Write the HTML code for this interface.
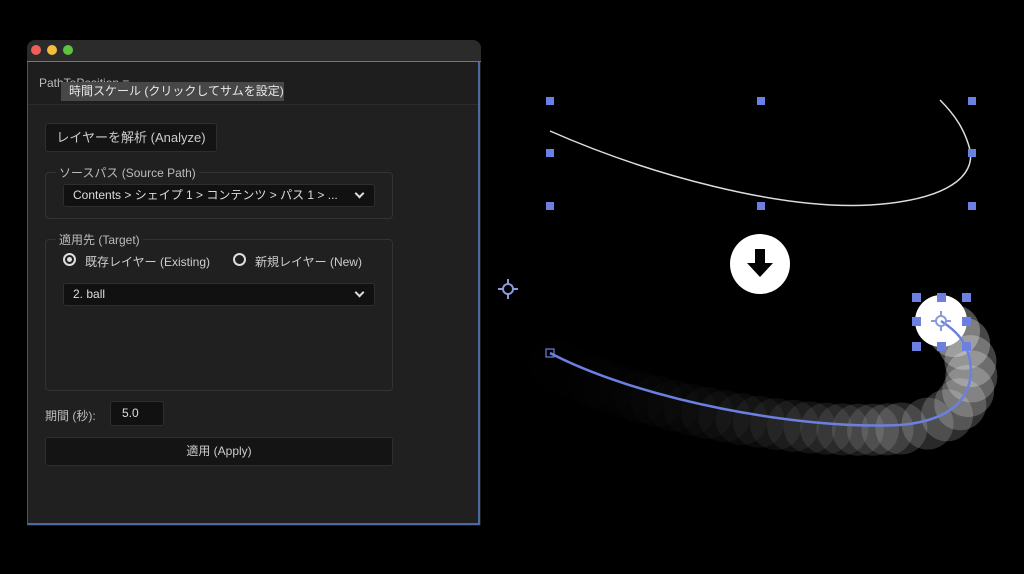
<!DOCTYPE html>
<html><head><meta charset="utf-8"><style>
*{margin:0;padding:0;box-sizing:border-box}
body{width:1024px;height:574px;background:#000;overflow:hidden;position:relative;font-family:"Liberation Sans","Noto Sans CJK JP",sans-serif;color:#c8c8c8;font-size:12px}
.win{position:absolute;left:27px;top:40px;width:454px;height:486px;background:#1e1e1e;border-radius:8px 8px 2px 2px;overflow:hidden}
.title{position:absolute;left:0;top:0;width:454px;height:22px;background:#2b2b2b;border-bottom:1px solid #5a7ab0}
.dot{position:absolute;top:5px;width:10px;height:10px;border-radius:50%}
.inner{position:absolute;left:0;top:22px;width:453px;height:463px;border-left:1px solid #3d5580;border-right:2px solid #4d6a9e;border-bottom:2px solid #4d6a9e}
.tab{position:absolute;left:11px;top:14px;font-size:12px;color:#bbb}
.tip{position:absolute;left:33px;top:20px;width:223px;height:19px;background:#474747;color:#e8e8e8;font-size:12px;line-height:19px;padding-left:8px}
.panel{position:absolute;left:0;right:0;top:42px;height:419px;background:#202020;border-top:1px solid #2c2c2c}
.btn{position:absolute;background:#141414;border:1px solid #2e2e2e;border-radius:3px;color:#ccc;text-align:center}
.grp{position:absolute;border:1px solid #333;border-radius:4px}
.lg{position:absolute;top:-9px;left:10px;background:#202020;padding:0 3px;color:#bbb}
.sel{position:absolute;background:#111;border:1px solid #2e2e2e;border-radius:3px;color:#ddd;padding-left:9px}
.chev{position:absolute;right:11px;top:5px;width:7px;height:7px;border-right:2px solid #ddd;border-bottom:2px solid #ddd;transform:rotate(45deg)}
.radio{position:absolute;width:13px;height:13px;border-radius:50%;border:2px solid #ddd}
</style></head><body>
<div class="win">
 <div class="title">
  <div class="dot" style="left:4px;background:#ee5f57"></div>
  <div class="dot" style="left:20px;background:#f4bd3e"></div>
  <div class="dot" style="left:36px;background:#5fc33f"></div>
 </div>
 <div class="inner">
  <div class="tab">PathToPosition ≡</div>
  <div class="tip">時間スケール (クリックしてサムを設定)</div>
  <div class="panel">
   <div class="btn" style="left:17px;top:18px;width:172px;height:29px;line-height:27px;font-size:13px">レイヤーを解析 (Analyze)</div>
   <div class="grp" style="left:17px;top:67px;width:348px;height:47px">
    <div class="lg">ソースパス (Source Path)</div>
    <div class="sel" style="left:17px;top:11px;width:312px;height:23px;line-height:21px">Contents &gt; シェイプ 1 &gt; コンテンツ &gt; パス 1 &gt; ...<div class="chev"></div></div>
   </div>
   <div class="grp" style="left:17px;top:134px;width:348px;height:152px">
    <div class="lg">適用先 (Target)</div>
    <div class="radio" style="left:17px;top:13px"><div style="position:absolute;left:2px;top:2px;width:5px;height:5px;border-radius:50%;background:#ddd"></div></div>
    <div style="position:absolute;left:39px;top:13px;color:#ccc">既存レイヤー (Existing)</div>
    <div class="radio" style="left:187px;top:13px"></div>
    <div style="position:absolute;left:209px;top:13px;color:#ccc">新規レイヤー (New)</div>
    <div class="sel" style="left:17px;top:43px;width:312px;height:23px;line-height:21px">2. ball<div class="chev"></div></div>
   </div>
   <div style="position:absolute;left:17px;top:302px;color:#bbb">期間 (秒):</div>
   <div class="sel" style="left:82px;top:296px;width:54px;height:25px;line-height:23px;padding-left:11px">5.0</div>
   <div class="btn" style="left:17px;top:332px;width:348px;height:29px;line-height:27px;font-size:12px">適用 (Apply)</div>
  </div>
 </div>
</div>
<svg width="1024" height="574" style="position:absolute;left:0;top:0" id="s">
 <g id="trail"></g>
 <path d="M550,131 C650,175 780,210 870,205 C950,200 975,175 970,150 C965,130 955,115 940,100" fill="none" stroke="#ddd" stroke-width="1.5"/>
 <g fill="#6b80e0">
  <rect x="546" y="97" width="8" height="8"/><rect x="757" y="97" width="8" height="8"/><rect x="968" y="97" width="8" height="8"/>
  <rect x="546" y="149" width="8" height="8"/><rect x="968" y="149" width="8" height="8"/>
  <rect x="546" y="202" width="8" height="8"/><rect x="757" y="202" width="8" height="8"/><rect x="968" y="202" width="8" height="8"/>
 </g>
 <circle cx="760" cy="264" r="30" fill="#fff"/>
 <path d="M755,249 h10 v14 h8 l-13,14 l-13,-14 h8 z" fill="#000"/>
 <g transform="translate(508,289)" stroke="#8a9ad8" fill="none" stroke-width="2">
  <circle r="5"/><path d="M0,-10 L0,-5 M0,5 L0,10 M-10,0 L-5,0 M5,0 L10,0"/>
 </g>
 <path d="M550,353 C640,400 800,430 900,425 C960,420 975,390 970,360 C966,340 955,330 941,321" fill="none" stroke="#6b80e0" stroke-width="2.5"/>
 <rect x="546" y="349" width="8" height="8" fill="none" stroke="#6b80e0" stroke-width="1.2"/>
 <g fill="#6b80e0">
  <rect x="912" y="293" width="9" height="9"/><rect x="937" y="293" width="9" height="9"/><rect x="962" y="293" width="9" height="9"/>
  <rect x="912" y="317" width="9" height="9"/><rect x="962" y="317" width="9" height="9"/>
  <rect x="912" y="342" width="9" height="9"/><rect x="937" y="342" width="9" height="9"/><rect x="962" y="342" width="9" height="9"/>
 </g>
 <g transform="translate(941,321)" stroke="#8a9ad8" fill="none" stroke-width="2">
  <circle r="5"/><path d="M0,-10 L0,-5 M0,5 L0,10 M-10,0 L-5,0 M5,0 L10,0"/>
 </g>
</svg>
<script>
(function(){
var segs=[[[550,353],[640,400],[800,430],[900,425]],[[900,425],[960,420],[975,390],[970,360]],[[970,360],[966,340],[955,330],[941,321]]];
function bz(s,t){var u=1-t;return[u*u*u*s[0][0]+3*u*u*t*s[1][0]+3*u*t*t*s[2][0]+t*t*t*s[3][0],u*u*u*s[0][1]+3*u*u*t*s[1][1]+3*u*t*t*s[2][1]+t*t*t*s[3][1]];}
var pts=[];
for(var i=0;i<=22;i++)pts.push(bz(segs[0],i/22));
for(var i=1;i<=6;i++)pts.push(bz(segs[1],i/6));
for(var i=1;i<=3;i++)pts.push(bz(segs[2],i/3));
var g=document.getElementById('trail'),n=pts.length,h='';
for(var k=0;k<n;k++){var f=k/(n-1);var op=k==n-1?1:0.005+0.32*Math.pow(f,2.4);var off=(1-f)*12;
h+='<circle cx="'+(pts[k][0]+off*0.4)+'" cy="'+(pts[k][1]+off)+'" r="26" fill="#fff" fill-opacity="'+op.toFixed(3)+'"/>';}
g.innerHTML=h;
})();
</script>
</body></html>
